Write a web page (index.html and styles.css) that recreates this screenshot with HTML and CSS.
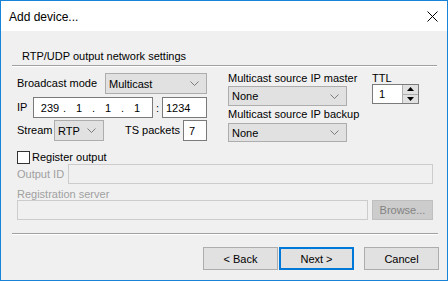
FILE: index.html
```html
<!DOCTYPE html>
<html>
<head>
<meta charset="utf-8">
<link rel="stylesheet" href="styles.css">
</head>
<body>
<div class="window">
  <div class="titlebar">
    <span class="title">Add device...</span>
    <svg class="close" width="11" height="11" viewBox="0 0 11 11"><path d="M0.5 0.5 L10.5 10.5 M10.5 0.5 L0.5 10.5" stroke="#000" stroke-width="1" fill="none"/></svg>
  </div>
  <div class="body">
    <div class="group-title">RTP/UDP output network settings</div>
    <div class="sep"></div>
    <div class="net">
      <div class="col-left">
        <div class="row r1">
          <span class="lbl lbl-mode">Broadcast mode</span>
          <div class="select sel-mode"><span>Multicast</span><svg class="chev" width="9" height="5" viewBox="0 0 9 5"><path d="M0.5 0.5 L4.5 4.5 L8.5 0.5" stroke="#707070" stroke-width="0.9" fill="none"/></svg></div>
        </div>
        <div class="row r2">
          <span class="lbl lbl-ip">IP</span>
          <div class="input ip">
            <span class="seg">239</span><span class="dot">.</span><span class="seg">1</span><span class="dot">.</span><span class="seg">1</span><span class="dot">.</span><span class="seg">1</span>
          </div>
          <span class="colon">:</span>
          <div class="input port">1234</div>
        </div>
        <div class="row r3">
          <span class="lbl lbl-stream">Stream</span>
          <div class="select sel-stream"><span>RTP</span><svg class="chev" width="9" height="5" viewBox="0 0 9 5"><path d="M0.5 0.5 L4.5 4.5 L8.5 0.5" stroke="#707070" stroke-width="0.9" fill="none"/></svg></div>
          <span class="lbl lbl-ts">TS packets</span>
          <div class="input ts">7</div>
        </div>
      </div>
      <div class="col-mid">
        <div class="lbl mid-lbl">Multicast source IP master</div>
        <div class="select sel-src"><span>None</span><svg class="chev" width="9" height="5" viewBox="0 0 9 5"><path d="M0.5 0.5 L4.5 4.5 L8.5 0.5" stroke="#707070" stroke-width="0.9" fill="none"/></svg></div>
        <div class="lbl mid-lbl2">Multicast source IP backup</div>
        <div class="select sel-src sel-src2"><span>None</span><svg class="chev" width="9" height="5" viewBox="0 0 9 5"><path d="M0.5 0.5 L4.5 4.5 L8.5 0.5" stroke="#707070" stroke-width="0.9" fill="none"/></svg></div>
      </div>
      <div class="col-ttl">
        <div class="lbl mid-lbl">TTL</div>
        <div class="spin">
          <div class="spin-val">1</div>
          <div class="spin-btns">
            <div class="spin-btn"><svg width="7" height="4" viewBox="0 0 7 4"><path d="M3.5 0 L7 4 L0 4 Z" fill="#000"/></svg></div>
            <div class="spin-btn"><svg width="7" height="4" viewBox="0 0 7 4"><path d="M0 0 L7 0 L3.5 4 Z" fill="#000"/></svg></div>
          </div>
        </div>
      </div>
    </div>
    <div class="check-row">
      <span class="checkbox"></span>
      <span class="check-lbl">Register output</span>
    </div>
    <div class="out-row">
      <span class="lbl dis">Output ID</span>
      <div class="input dis-input out-id"></div>
    </div>
    <div class="lbl dis reg-lbl">Registration server</div>
    <div class="server-row">
      <div class="input dis-input server"></div>
      <div class="btn btn-dis">Browse...</div>
    </div>
    <div class="sep sep-bottom"></div>
    <div class="buttons">
      <div class="btn">&lt; Back</div>
      <div class="btn btn-default">Next &gt;</div>
      <div class="btn btn-cancel">Cancel</div>
    </div>
  </div>
</div>
</body>
</html>
```

FILE: styles.css
```css
* { box-sizing: border-box; }
html, body { margin: 0; padding: 0; background: #ffffff; }
body {
  font-family: "Liberation Sans", Arial, sans-serif;
  font-size: 11px;
  color: #000;
}
.window {
  width: 448px;
  height: 281px;
  border: 1px solid #1883d7;
  background: #f0f0f0;
  display: flex;
  flex-direction: column;
}
.titlebar {
  height: 30px;
  background: #fff;
  display: flex;
  align-items: center;
  padding-left: 8px;
  flex: none;
  font-size: 12px;
}
.title { line-height: 30px; flex: 1; padding-top: 1px; }
.close { margin-right: 9px; margin-top: 1px; }
.body {
  flex: 1;
  padding: 0 0 0 16px;
}
.lbl, .group-title, .check-lbl { line-height: 15px; white-space: nowrap; }
.group-title {
  margin-top: 18px;
  margin-left: 5px;
  height: 15px;
}
.sep {
  margin-top: 1px;
  margin-left: -5px;
  width: 425px;
  height: 2px;
  border-top: 1px solid #a0a0a0;
  border-bottom: 1px solid #fff;
}
.net {
  display: flex;
  margin-top: 6px;
  height: 68px;
}
.row {
  display: flex;
  align-items: center;
  height: 21px;
}
.r2 { margin-top: 3px; }
.r3 { margin-top: 2px; }
.lbl-mode { width: 88px; }
.lbl-ip { width: 16px; }
.lbl-stream { width: 37px; }
.lbl-ts { margin-left: 21px; width: 58px; }
.select {
  height: 21px;
  background: #e1e1e1;
  border: 1px solid #adadad;
  display: flex;
  align-items: center;
  justify-content: space-between;
  padding: 0 7px 0 3px;
}
.sel-mode { width: 102px; }
.sel-stream { width: 50px; }
.input {
  height: 21px;
  background: #fff;
  border: 1px solid #7a7a7a;
  display: flex;
  align-items: center;
  padding: 0 3px;
}
.ip { width: 120px; padding-left: 5px; }
.seg { width: 22px; text-align: center; }
.dot { width: 7px; text-align: center; }
.colon { width: 9px; text-align: center; }
.port { width: 45px; }
.ts { width: 24px; padding-left: 5px; }
.col-left { width: 211px; }
.col-mid { width: 144px; }
.mid-lbl { margin-top: -2px; height: 15px; }
.sel-src { width: 119px; height: 20px; }
.mid-lbl2 { height: 17px; line-height: 17px; }
.sel-src2 { height: 19px; }
.spin {
  margin-top: -2px;
  width: 47px;
  height: 20px;
  border: 1px solid #7a7a7a;
  background: #fff;
  display: flex;
}
.spin-val { flex: 1; padding-left: 6px; line-height: 18px; }
.spin-btns {
  width: 16px;
  display: flex;
  flex-direction: column;
  border-left: 1px solid #adadad;
  background: #e1e1e1;
}
.spin-btn {
  flex: 1;
  display: flex;
  align-items: center;
  justify-content: center;
}
.spin-btn + .spin-btn { border-top: 1px solid #adadad; }
.check-row {
  display: flex;
  align-items: center;
  margin-top: 10px;
  height: 13px;
}
.checkbox {
  width: 13px;
  height: 13px;
  border: 1px solid #333;
  background: #fff;
  margin-right: 2px;
}
.out-row {
  display: flex;
  align-items: center;
  height: 20px;
}
.dis { color: #a0a0a0; }
.out-row .lbl { width: 51px; }
.dis-input {
  background: #f0f0f0;
  border-color: #cccccc;
}
.out-id { width: 365px; height: 20px; }
.reg-lbl { margin-top: 3px; height: 13px; }
.server-row {
  display: flex;
  height: 20px;
}
.server { width: 351px; height: 20px; }
.btn {
  width: 75px;
  height: 23px;
  background: #e1e1e1;
  border: 1px solid #adadad;
  display: flex;
  align-items: center;
  justify-content: center;
}
.btn-dis {
  margin-left: 4px;
  width: 61px;
  height: 20px;
  background: #cccccc;
  border-color: #bfbfbf;
  color: #838383;
}
.sep-bottom { margin-top: 13px; width: 426px; }
.buttons {
  display: flex;
  margin-top: 12px;
  padding-left: 186px;
}
.btn-default { border: 2px solid #0078d7; margin-left: 1px; }
.btn-cancel { margin-left: 10px; }
```
